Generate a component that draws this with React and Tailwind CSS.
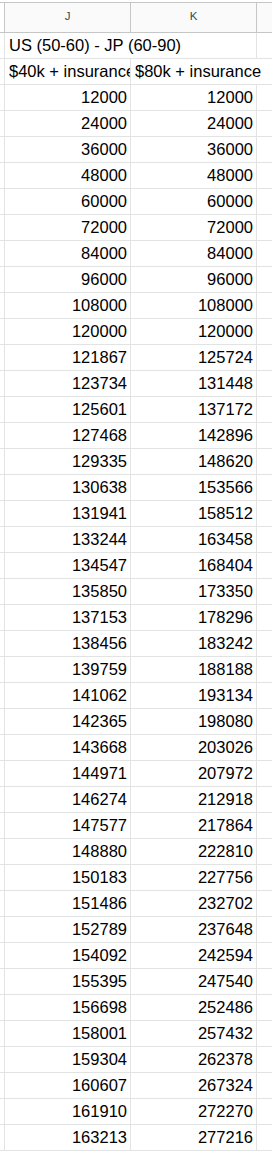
import React from "react";

const colJ = [
  12000, 24000, 36000, 48000, 60000, 72000, 84000, 96000, 108000, 120000,
  121867, 123734, 125601, 127468, 129335,
];
const colK = [
  12000, 24000, 36000, 48000, 60000, 72000, 84000, 96000, 108000, 120000,
  125724, 131448, 137172, 142896, 148620,
];
// rest of the rows grow by a fixed step
for (let i = 1; i <= 26; i++) {
  colJ.push(129335 + i * 1303);
  colK.push(148620 + i * 4946);
}

const Row = ({ children }) => (
  <div className="flex h-[26px] border-b border-[#e2e3e3]">
    <div className="w-[5px] shrink-0 border-r border-[#e2e3e3]" />
    {children}
    <div className="flex-1" />
  </div>
);

const App = () => {
  return (
    <div
      className="w-[272px] bg-white text-black text-[16.5px] leading-none"
      style={{ fontFamily: '"Liberation Sans", Arial, sans-serif' }}
    >
      {/* column header */}
      <div className="mt-[2px] flex h-[31px] border-y border-[#c4c7c5] bg-[#fafafa] text-[11.5px] text-[#444746]">
        <div className="w-[5px] shrink-0 border-r border-[#c4c7c5] bg-white" />
        <div className="w-[126px] shrink-0 flex items-center justify-center pb-[1px] border-r border-[#c4c7c5]">
          J
        </div>
        <div className="w-[126px] shrink-0 flex items-center justify-center pb-[1px] border-r border-[#c4c7c5]">
          K
        </div>
        <div className="flex-1" />
      </div>

      <Row>
        <div className="w-[252px] shrink-0 flex items-end pb-[5px] pl-[4px] whitespace-nowrap border-r border-[#e2e3e3]">
          US (50-60) - JP (60-90)
        </div>
      </Row>

      <Row>
        <div className="w-[126px] shrink-0 flex items-end pb-[5px] pl-[4px] whitespace-nowrap overflow-hidden border-r border-[#e2e3e3]">
          $40k + insurance
        </div>
        <div className="w-[126px] shrink-0 flex items-end pb-[5px] pl-[4px] whitespace-nowrap relative z-10">
          $80k + insurance
        </div>
      </Row>

      {colJ.map((j, i) => (
        <Row key={i}>
          <div className="w-[126px] shrink-0 flex items-end justify-end pb-[5px] pr-[3px] border-r border-[#e2e3e3]">
            {j}
          </div>
          <div className="w-[126px] shrink-0 flex items-end justify-end pb-[5px] pr-[3px] border-r border-[#e2e3e3]">
            {colK[i]}
          </div>
        </Row>
      ))}
    </div>
  );
};

export default App;
